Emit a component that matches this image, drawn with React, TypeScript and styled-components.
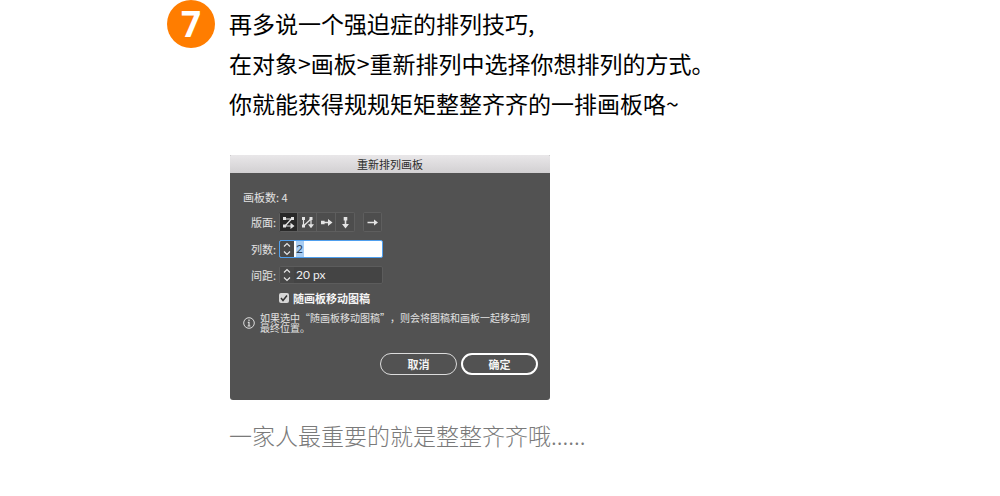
import React, { useState } from "react";
import styled, { createGlobalStyle } from "styled-components";

const GlobalStyle = createGlobalStyle`
  * { box-sizing: border-box; }
  body {
    margin: 0;
    background: #fff;
    color: #000;
    font-family: "Noto Sans CJK SC", sans-serif;
  }
  button, input { font-family: inherit; margin: 0; }
`;

const Step = styled.main`
  display: flex;
  align-items: flex-start;
  gap: 14px;
  padding: 0 16px 32px 167px;
`;

const Badge = styled.div`
  flex: none;
  width: 48px;
  height: 48px;
  border-radius: 50%;
  background: #ff7d00;
  color: #fff;
  font: 700 35px/48px "Noto Sans", sans-serif;
  text-align: center;
`;

const Content = styled.div`
  flex: 1;
  min-width: 0;
  padding-top: 3px;
`;

const Intro = styled.p`
  margin: 0;
  font-size: 23px;
  line-height: 40px;
`;

const Caption = styled(Intro)`
  margin-top: 15px;
  color: #7a7a7a;
  font-weight: 300;
`;

const Dialog = styled.section`
  width: 100%;
  max-width: 320px;
  margin: 32px 0 0 1px;
  overflow: hidden;
  border-radius: 1px 1px 3px 3px;
  background: #525252;
  color: #e2e2e2;
  font-size: 11px;
`;

const TitleBar = styled.h2`
  margin: 0;
  height: 18px;
  background: linear-gradient(#e9e7e9, #d2d0d2);
  color: #2c2c2c;
  font-size: 11px;
  font-weight: 400;
  line-height: 18px;
  text-align: center;
`;

const Form = styled.form`
  display: flex;
  flex-direction: column;
  padding: 15px 12px 25px 13px;
`;

const Count = styled.div`
  line-height: 18px;
`;

const Fields = styled.div`
  display: grid;
  grid-template-columns: 33px 104px;
  column-gap: 3px;
  row-gap: 8px;
  align-items: center;
  margin-top: 6px;
`;

const FieldLabel = styled.label`
  line-height: 18px;
  text-align: right;
  white-space: nowrap;
`;

const Tools = styled.div`
  display: flex;
  gap: 8px;
`;

const ToolGroup = styled.div`
  display: flex;
  border-radius: 2px;
  overflow: hidden;
`;

const ToolButton = styled.button<{ $active?: boolean }>`
  display: flex;
  align-items: center;
  justify-content: center;
  width: 19px;
  height: 20px;
  padding: 0;
  border: 1px solid #5e5e5e;
  background: ${(p) => (p.$active ? "#292929" : "#4d4d4d")};
  color: #e4e4e4;
  & + & { border-left-width: 0; }
`;

const NumberBox = styled.div<{ $focused?: boolean }>`
  display: flex;
  height: 18px;
  border: 1px solid ${(p) => (p.$focused ? "#4f9fee" : "#5c5c5c")};
  border-radius: 2px;
  overflow: hidden;
  background: ${(p) => (p.$focused ? "#fff" : "#444")};
  color: ${(p) => (p.$focused ? "#28405c" : "#f0f0f0")};
`;

const Stepper = styled.button`
  flex: none;
  display: flex;
  align-items: center;
  justify-content: center;
  width: 14px;
  padding: 0;
  border: 0;
  background: #484848;
  color: #e4e4e4;
`;

const NumberInput = styled.input<{ $selected?: boolean }>`
  width: ${(p) => (p.$selected ? "8px" : "80px")};
  margin-left: 2px;
  padding: 0;
  border: 0;
  outline: 0;
  background: ${(p) => (p.$selected ? "#a9cdf2" : "transparent")};
  color: inherit;
  font: 400 12px/16px Lato, sans-serif;
`;

const CheckLabel = styled.label`
  display: flex;
  align-items: center;
  gap: 4px;
  margin: 5px 0 0 36px;
  color: #f4f4f4;
  font-weight: 700;
  line-height: 18px;
`;

const CheckBox = styled.input`
  appearance: none;
  width: 10px;
  height: 10px;
  border-radius: 2px;
  background: #d6d6d6;
  & + svg { margin-left: -14px; }
  &:not(:checked) + svg { visibility: hidden; }
`;

const Note = styled.div`
  display: flex;
  align-items: center;
  gap: 5px;
  margin-top: 6px;
`;

const NoteText = styled.p`
  flex: 1;
  margin: 0;
  font-size: 10px;
  line-height: 10px;
  text-spacing-trim: space-all;
`;

const Actions = styled.div`
  display: flex;
  justify-content: flex-end;
  gap: 4px;
  margin-top: 20px;
`;

const PillButton = styled.button<{ $primary?: boolean }>`
  width: 77px;
  height: 22px;
  padding: 0;
  border: ${(p) => (p.$primary ? "2px solid #fff" : "1px solid #dcdcdc")};
  border-radius: 11px;
  background: transparent;
  color: #f4f4f4;
  font-size: 11px;
  font-weight: 700;
  line-height: 16px;
`;

const icons = {
  rows: (
    <>
      <path d="M2.500 3H9.500L3 10H9" fill="none" stroke="currentColor" strokeWidth="1.200" />
      <path d="M1 1h3v3H1zM9 1h3v3H9zM1 8.500h3v3H1zM8.500 6.800l4 3.200-4 3z" fill="currentColor" />
    </>
  ),
  columns: (
    <>
      <path d="M2.500 2.500V10L10 3v6" fill="none" stroke="currentColor" strokeWidth="1.200" />
      <path d="M1 1h3v3H1zM8.500 1h3v3h-3zM1 8.500h3v3H1zM7 8.200h6L10 12.300z" fill="currentColor" />
    </>
  ),
  singleRow: (
    <>
      <path d="M3 6.500h6" fill="none" stroke="currentColor" strokeWidth="1.600" />
      <path d="M1 4.700h3.600v3.600H1zM8 3l4.500 3.500L8 10z" fill="currentColor" />
    </>
  ),
  singleColumn: (
    <>
      <path d="M6.500 3v6" fill="none" stroke="currentColor" strokeWidth="1.600" />
      <path d="M4.700 1h3.600v3.600H4.700zM3 8h7l-3.500 4.500z" fill="currentColor" />
    </>
  ),
  arrow: (
    <>
      <path d="M1.500 6.500h8" fill="none" stroke="currentColor" strokeWidth="1.300" />
      <path d="M8 3.500l4 3-4 3z" fill="currentColor" />
    </>
  ),
};

type IconName = keyof typeof icons;

const Icon = ({ name }: { name: IconName }) => (
  <svg width="13" height="13" viewBox="0 0 13 13" aria-hidden="true">
    {icons[name]}
  </svg>
);

const Chevrons = () => (
  <svg width="8" height="14" viewBox="0 0 8 14" fill="none" stroke="currentColor" strokeWidth="1.200" aria-hidden="true">
    <path d="M1 4.500l3-3 3 3M1 9.500l3 3 3-3" />
  </svg>
);

const layouts: { name: IconName; label: string }[] = [
  { name: "rows", label: "按行设置网格" },
  { name: "columns", label: "按列设置网格" },
  { name: "singleRow", label: "按行排列" },
  { name: "singleColumn", label: "按列排列" },
];

export default function App() {
  const [layout, setLayout] = useState<IconName>("rows");
  const [columns, setColumns] = useState("2");
  const [spacing, setSpacing] = useState("20 px");

  return (
    <>
      <GlobalStyle />
      <Step lang="zh-CN">
        <Badge>7</Badge>
        <Content>
          <Intro>再多说一个强迫症的排列技巧,</Intro>
          <Intro>在对象&gt;画板&gt;重新排列中选择你想排列的方式。</Intro>
          <Intro>你就能获得规规矩矩整整齐齐的一排画板咯~</Intro>

          <Dialog aria-labelledby="dialog-title">
            <TitleBar id="dialog-title">重新排列画板</TitleBar>
            <Form onSubmit={(e) => e.preventDefault()}>
              <Count>画板数: 4</Count>
              <Fields>
                <FieldLabel as="span">版面:</FieldLabel>
                <Tools>
                  <ToolGroup>
                    {layouts.map((item) => (
                      <ToolButton
                        key={item.name}
                        type="button"
                        aria-label={item.label}
                        $active={layout === item.name}
                        onClick={() => setLayout(item.name)}
                      >
                        <Icon name={item.name} />
                      </ToolButton>
                    ))}
                  </ToolGroup>
                  <ToolGroup>
                    <ToolButton type="button" aria-label="更改为从右至左的版面">
                      <Icon name="arrow" />
                    </ToolButton>
                  </ToolGroup>
                </Tools>

                <FieldLabel htmlFor="columns">列数:</FieldLabel>
                <NumberBox $focused>
                  <Stepper type="button" aria-label="调整列数"><Chevrons /></Stepper>
                  <NumberInput id="columns" $selected value={columns} onChange={(e) => setColumns(e.target.value)} />
                </NumberBox>

                <FieldLabel htmlFor="spacing">间距:</FieldLabel>
                <NumberBox>
                  <Stepper type="button" aria-label="调整间距"><Chevrons /></Stepper>
                  <NumberInput id="spacing" value={spacing} onChange={(e) => setSpacing(e.target.value)} />
                </NumberBox>
              </Fields>

              <CheckLabel>
                <CheckBox type="checkbox" defaultChecked />
                <svg width="10" height="10" viewBox="0 0 10 10" aria-hidden="true">
                  <path d="M2 5l2 2.500L8 2.500" fill="none" stroke="#333" strokeWidth="1.500" />
                </svg>
                随画板移动图稿
              </CheckLabel>

              <Note>
                <svg width="12" height="12" viewBox="0 0 12 12" aria-hidden="true">
                  <circle cx="6" cy="6" r="5.300" fill="none" stroke="#dedede" />
                  <path d="M6 2.500v1.500M4.800 5.300H6V9M4.600 9h2.800" fill="none" stroke="#dedede" strokeWidth="1.200" />
                </svg>
                <NoteText>如果选中“随画板移动图稿”，则会将图稿和画板一起移动到最终位置。</NoteText>
              </Note>

              <Actions>
                <PillButton type="button">取消</PillButton>
                <PillButton type="submit" $primary>确定</PillButton>
              </Actions>
            </Form>
          </Dialog>

          <Caption>一家人最重要的就是整整齐齐哦......</Caption>
        </Content>
      </Step>
    </>
  );
}
